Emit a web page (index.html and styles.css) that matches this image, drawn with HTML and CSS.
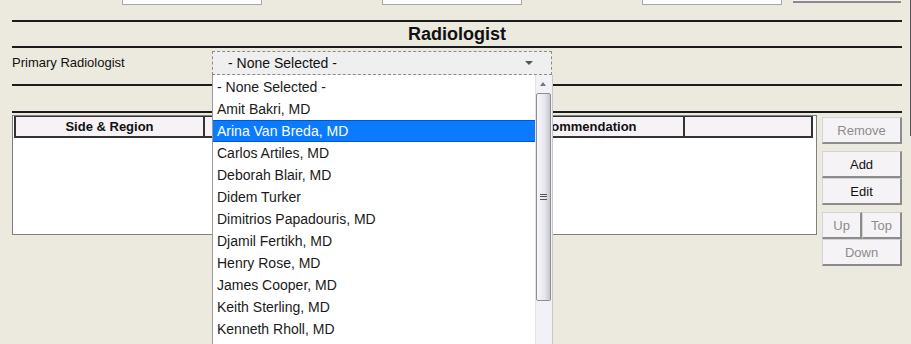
FILE: index.html
```html
<!DOCTYPE html>
<html lang="en">
<head>
  <meta charset="UTF-8">
  <title>Radiologist</title>
  <link rel="stylesheet" href="styles.css">
</head>
<body>

<div class="frame">
  <div class="main">

    <!-- Fields above (scrolled off) -->
    <div class="top-fields">
      <div class="field-box"></div>
      <div class="field-box"></div>
      <div class="field-box"></div>
      <div class="top-btn"></div>
    </div>

    <div class="rule rule-first"></div>
    <h2 class="section-title">Radiologist</h2>
    <div class="rule"></div>

    <!-- Primary radiologist picker -->
    <div class="field-row">
      <label class="field-label">Primary Radiologist</label>
      <div class="picker">
        <div class="picker-value">- None Selected -</div>
        <span class="picker-arrow"></span>

        <div class="picker-list">
          <ul class="options">
            <li>- None Selected -</li>
            <li>Amit Bakri, MD</li>
            <li class="selected">Arina Van Breda, MD</li>
            <li>Carlos Artiles, MD</li>
            <li>Deborah Blair, MD</li>
            <li>Didem Turker</li>
            <li>Dimitrios Papadouris, MD</li>
            <li>Djamil Fertikh, MD</li>
            <li>Henry Rose, MD</li>
            <li>James Cooper, MD</li>
            <li>Keith Sterling, MD</li>
            <li>Kenneth Rholl, MD</li>
          </ul>
          <div class="scrollbar">
            <div class="scroll-up"></div>
            <div class="scroll-thumb"><span class="grip"></span></div>
          </div>
        </div>
      </div>
    </div>

    <div class="rule"></div>
    <div class="spacer"></div>
    <div class="rule"></div>

    <!-- Findings table and actions -->
    <div class="grid-row">
      <div class="grid">
        <div class="grid-head">
          <div class="col col-side">Side &amp; Region</div>
          <div class="col col-finding"></div>
          <div class="col col-rec">Recommendation</div>
          <div class="col col-extra"></div>
        </div>
      </div>

      <div class="actions">
        <button class="btn disabled">Remove</button>
        <div class="btn-group">
          <button class="btn">Add</button>
          <button class="btn">Edit</button>
        </div>
        <div class="btn-group">
          <div class="btn-pair">
            <button class="btn disabled">Up</button>
            <button class="btn disabled">Top</button>
          </div>
          <button class="btn disabled">Down</button>
        </div>
      </div>
    </div>

  </div>
  <div class="edge"></div>
</div>

</body>
</html>
```

FILE: styles.css
```css
body { margin: 0; font-family: "Liberation Sans", Arial, sans-serif; background-color: #ece9df; color: #111; overflow: hidden; }
.frame { display: flex; height: 344px; }
.main { width: 910px; padding: 0 8px 0 12px; box-sizing: border-box; }
.edge { width: 1px; height: 136px; background: #555; }

/* Fields above */
.top-fields { height: 5px; display: flex; align-items: flex-end; padding-left: 110px; }
.field-box { width: 138px; height: 20px; background: #fff; border: 1px solid #a8a8a8; margin-right: 120px; flex-shrink: 0; }
.field-box:nth-child(3) { margin-right: 11px; }
.top-btn { width: 108px; height: 10px; align-self: flex-start; margin-top: -9px; background: #f4f2f4; border-bottom: 2px solid #8a8a8a; }

/* Rules and heading */
.rule { height: 0; border-top: 2px solid #1c1c1c; }
.rule-first { margin-top: 15px; }
.section-title { margin: 0; height: 24px; line-height: 24px; text-align: center; font-size: 18px; font-weight: bold; }
.spacer { height: 25px; }

/* Picker row */
.field-row { display: flex; align-items: flex-start; height: 36px; padding-top: 3px; box-sizing: border-box; }
.field-label { width: 200px; font-size: 13px; line-height: 24px; }
.picker { position: relative; width: 340px; height: 24px; box-sizing: border-box; border: 1px dashed #8c8c8c; background: #efefef; }
.picker-value { line-height: 22px; padding-left: 15px; font-size: 14px; }
.picker-arrow {
  position: absolute;
  right: 18px;
  top: 9px;
  border-left: 4px solid transparent;
  border-right: 4px solid transparent;
  border-top: 4px solid #555;
}

/* Open dropdown */
.picker-list {
  position: absolute;
  top: 23px;
  left: -1px;
  width: 341px;
  height: 280px;
  display: flex;
  background: #fff;
  border-left: 1px solid #9a9a9a;
  border-right: 1px solid #c8c8c8;
  box-sizing: border-box;
  z-index: 5;
}
.options { list-style: none; margin: 0; padding: 1px 0 0; flex: 1; font-size: 14px; color: #1a1a1a; }
.options li { height: 22px; line-height: 22px; padding-left: 4px; white-space: nowrap; }
.options li.selected { background: #0a7bff; color: #fff; box-shadow: inset 0 1px 0 #0056d8, inset 0 -1px 0 #0056d8; }
.scrollbar { width: 16px; background: #f2f1f5; border-left: 1px solid #e2e2e8; }
.scroll-up { height: 18px; position: relative; }
.scroll-up::after {
  content: "";
  position: absolute;
  left: 4px;
  top: 7px;
  border-left: 3px solid transparent;
  border-right: 3px solid transparent;
  border-bottom: 4px solid #777;
}
.scroll-thumb {
  height: 206px;
  margin: 0 1px 0 0;
  border: 1px solid #8e8e92;
  border-radius: 2px;
  background: linear-gradient(to right, #f6f6fa, #e6e6ec 60%, #c6c6cf);
  display: flex;
  align-items: center;
  justify-content: center;
}
.grip { width: 7px; height: 6px; border-top: 1px solid #555; border-bottom: 1px solid #555; position: relative; box-sizing: border-box; }
.grip::after { content: ""; position: absolute; left: 0; right: 0; top: 1px; height: 2px; border-top: 1px solid #555; }

/* Table and actions */
.grid-row { display: flex; gap: 5px; margin-top: 2px; }
.grid { width: 806px; height: 120px; box-sizing: border-box; border: 1px solid #808080; background: #fff; padding: 0 3px 0 1px; }
.grid-head { display: flex; border-top: 1px solid #333; border-left: 2px solid #333; border-bottom: 2px solid #333; background: #f6f2f6; box-sizing: border-box; height: 22px; }
.col { border-right: 2px solid #333; font-size: 13px; font-weight: bold; text-align: center; line-height: 19px; box-sizing: border-box; overflow: hidden; white-space: nowrap; }
.col-side { width: 189px; }
.col-finding { width: 276px; }
.col-rec { width: 204px; }
.col-extra { flex: 1; }

.actions { width: 80px; display: flex; flex-direction: column; gap: 7px; margin-top: 2px; }
.btn-group { display: flex; flex-direction: column; }
.btn-pair { display: flex; }
.btn-pair .btn { flex: 1; }
.btn {
  height: 27px;
  padding: 0;
  font-family: "Liberation Sans", Arial, sans-serif;
  font-size: 13px;
  color: #111;
  background: #f6f3f6;
  border-top: 1px solid #d6d3d6;
  border-left: 1px solid #d6d3d6;
  border-right: 2px solid #8c8c8c;
  border-bottom: 2px solid #8c8c8c;
  box-sizing: border-box;
}
.btn.disabled { color: #8c8c8c; }
```
